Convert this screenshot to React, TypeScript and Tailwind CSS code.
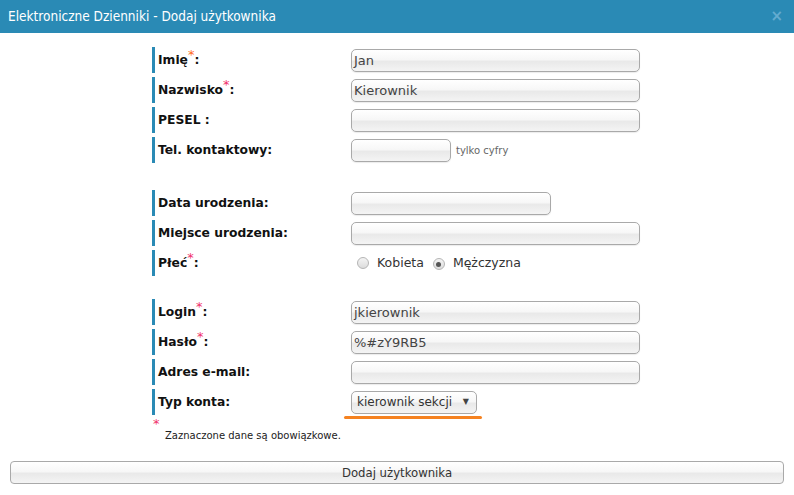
import React from "react";

const inputCls =
  "h-[23px] rounded-[5px] border border-[#a9a9a9] bg-[linear-gradient(to_bottom,#ffffff_0%,#f7f7f7_45%,#e9e9e9_55%,#f4f4f4_100%)] px-[2px] text-[13px] leading-[21px] text-[#444] shadow-[0_1px_1px_rgba(0,0,0,0.08)]";

function Star({ color = "#f0306a" }: { color?: string }) {
  return (
    <span className="relative -top-[5px] text-[13px] font-normal" style={{ color }}>
      *
    </span>
  );
}

function Row({
  label,
  children,
}: {
  label: React.ReactNode;
  children?: React.ReactNode;
}) {
  return (
    <div className="flex h-[26px] items-center">
      <div className="flex h-[26px] w-[199px] items-center border-l-[3px] border-[#2a8ab5] pl-[3px] text-[12.3px] font-bold text-[#111]">
        {label}
      </div>
      <div className="flex items-center">{children}</div>
    </div>
  );
}

function Input({ value = "", w = "w-[289px]" }: { value?: string; w?: string }) {
  return <div className={`${inputCls} ${w}`}>{value}</div>;
}

function Radio({ checked }: { checked?: boolean }) {
  return (
    <span className="inline-flex h-[12px] w-[12px] items-center justify-center rounded-full border border-[#b5b5b5] bg-[linear-gradient(to_bottom,#f4f4f4,#dcdcdc)]">
      {checked && <span className="h-[5px] w-[5px] rounded-full bg-[#555]" />}
    </span>
  );
}

export default function App() {
  return (
    <div
      className="flex h-[495px] w-[794px] flex-col bg-white"
      style={{ fontFamily: '"DejaVu Sans", Verdana, sans-serif' }}
    >
      <div className="flex h-[33px] items-center justify-between bg-[#2a8ab5] pl-[8px] pr-[11px]">
        <span
          className="text-[13.5px] text-white"
          style={{ fontFamily: '"DejaVu Sans Condensed", "DejaVu Sans", sans-serif' }}
        >
          Elektroniczne Dzienniki - Dodaj użytkownika
        </span>
        <span className="text-[15px] font-bold text-[#64acd0]">×</span>
      </div>

      <div className="mx-auto flex w-[490px] flex-col pt-[14px]">
        <div className="flex flex-col gap-[4px]">
          <Row label={<>Imię<Star color="#ff6a1a" />:</>}>
            <Input value="Jan" />
          </Row>
          <Row label={<>Nazwisko<Star />:</>}>
            <Input value="Kierownik" />
          </Row>
          <Row label="PESEL :">
            <Input />
          </Row>
          <Row label="Tel. kontaktowy:">
            <Input w="w-[100px]" />
            <span className="ml-[5px] text-[10px] text-[#666]">tylko cyfry</span>
          </Row>
        </div>

        <div className="mt-[27px] flex flex-col gap-[4px]">
          <Row label="Data urodzenia:">
            <Input w="w-[200px]" />
          </Row>
          <Row label="Miejsce urodzenia:">
            <Input />
          </Row>
          <Row label={<>Płeć<Star />:</>}>
            <div className="flex items-center pl-[6px] text-[12.5px] text-[#333]">
              <Radio />
              <span className="ml-[8px]">Kobieta</span>
              <span className="ml-[9px]">
                <Radio checked />
              </span>
              <span className="ml-[8px]">Mężczyzna</span>
            </div>
          </Row>
        </div>

        <div className="mt-[23px] flex flex-col gap-[4px]">
          <Row label={<>Login<Star />:</>}>
            <Input value="jkierownik" />
          </Row>
          <Row label={<>Hasło<Star />:</>}>
            <Input value="%#zY9RB5" />
          </Row>
          <Row label="Adres e-mail:">
            <Input />
          </Row>
          <Row label="Typ konta:">
            <div className="relative">
              <div className="flex h-[23px] w-[126px] items-center justify-between rounded-[5px] border border-[#a9a9a9] bg-[linear-gradient(to_bottom,#ffffff_0%,#f7f7f7_45%,#e9e9e9_55%,#f4f4f4_100%)] pl-[5px] pr-[7px] text-[12px] text-[#333]">
                <span>kierownik sekcji</span>
                <span className="text-[8px] text-[#444]">▼</span>
              </div>
              <div className="absolute left-[-7px] top-[25px] h-[3px] w-[138px] rounded-full bg-[#f58220]" />
            </div>
          </Row>
        </div>

        <div className="mt-[3px] flex flex-col">
          <span className="pl-[1px] text-[13px] leading-[12px] text-[#f0306a]">*</span>
          <span className="pl-[13px] text-[10px] leading-[11px] text-[#222]">
            Zaznaczone dane są obowiązkowe.
          </span>
        </div>
      </div>

      <div className="mt-[20px] px-[10px]">
        <div
          className="flex h-[23px] w-full items-center justify-center rounded-[4px] border border-[#a9a9a9] bg-[linear-gradient(to_bottom,#ffffff_0%,#f7f7f7_45%,#e9e9e9_55%,#f4f4f4_100%)] text-[13px] text-[#333]"
          style={{ fontFamily: '"DejaVu Sans Condensed", "DejaVu Sans", sans-serif' }}
        >
          Dodaj użytkownika
        </div>
      </div>
    </div>
  );
}
